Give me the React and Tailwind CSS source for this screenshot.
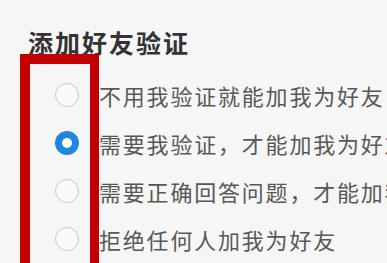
import React from "react";

const items = [
  { label: "不用我验证就能加我为好友", checked: false },
  { label: "需要我验证，才能加我为好友", checked: true },
  { label: "需要正确回答问题，才能加我为好友", checked: false },
  { label: "拒绝任何人加我为好友", checked: false },
];

function Radio({ checked }) {
  if (checked) {
    return (
      <div className="w-[24px] h-[24px] rounded-full bg-[#1e88e0] flex items-center justify-center shrink-0">
        <div className="w-[10px] h-[10px] rounded-full bg-white" />
      </div>
    );
  }
  return <div className="w-[24px] h-[24px] rounded-full border-[1.5px] border-[#c8c8c8] bg-[#fafafa] shrink-0" />;
}

export default function App() {
  return (
    <div
      className="relative w-[387px] h-[263px] overflow-hidden bg-[#f6f6f6]"
      style={{ fontFamily: '"Noto Sans CJK SC", "Noto Sans", sans-serif' }}
    >
      <div className="pl-[28px] pt-[30px]">
        <div className="text-[25px] leading-[24px] font-bold text-[#333] tracking-[2px] whitespace-nowrap">添加好友验证</div>
        <div className="mt-[17px] flex flex-col">
          {items.map((it, i) => (
            <div key={i} className="h-[48px] flex items-center whitespace-nowrap">
              <div className="ml-[27px]">
                <Radio checked={it.checked} />
              </div>
              <span className="ml-[20px] text-[22px] leading-[24px] text-[#585858] tracking-[1.8px]">{it.label}</span>
            </div>
          ))}
        </div>
      </div>
      <div className="absolute left-[20px] top-[54px] w-[79px] h-[230px] border-[10px] border-r-[9px] border-[#c20000]" />
    </div>
  );
}
